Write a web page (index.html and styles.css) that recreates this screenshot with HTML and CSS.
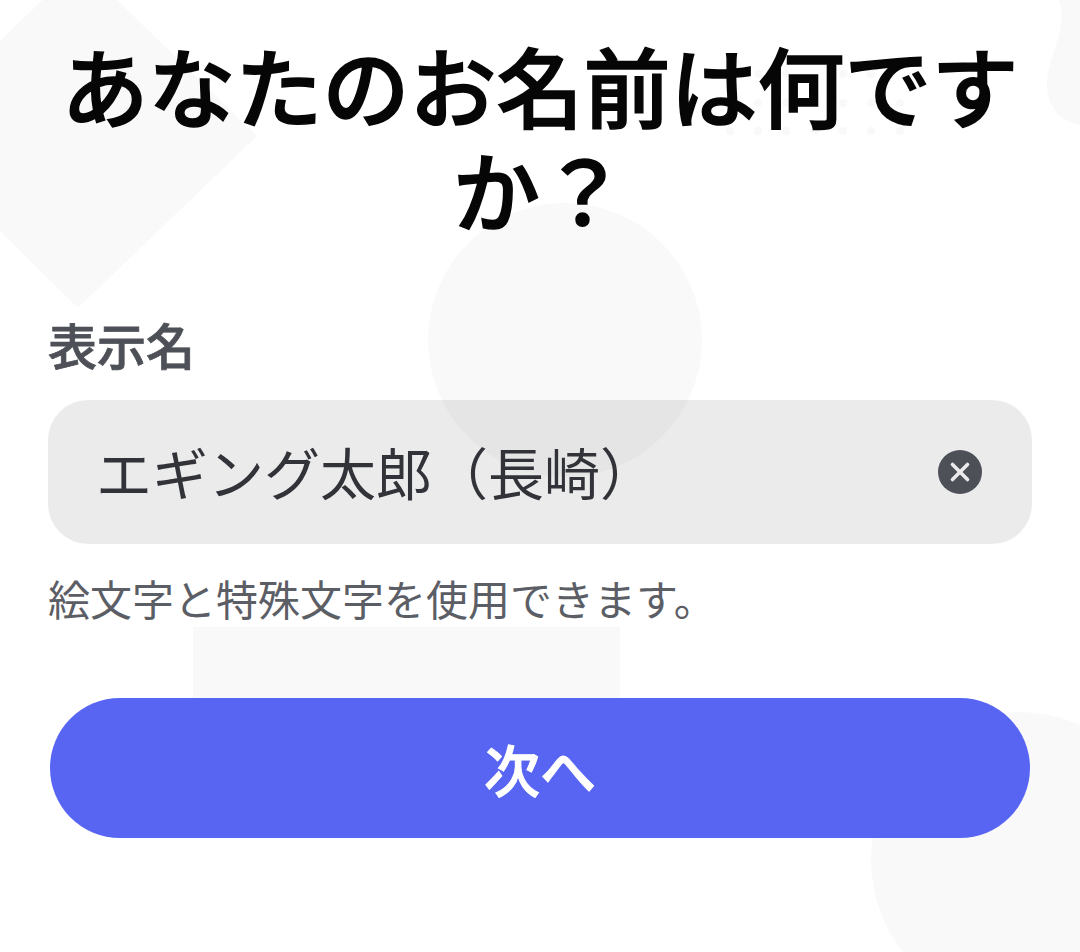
FILE: index.html
```html
<!DOCTYPE html>
<html lang="ja">
<head>
    <meta charset="UTF-8">
    <meta name="viewport" content="width=device-width, initial-scale=1.0">
    <title>表示名</title>
    <link rel="stylesheet" href="styles.css">
</head>
<body>
    <svg class="backdrop" width="1080" height="952" viewBox="0 0 1080 952" aria-hidden="true">
      <path d="M80 -36 L256 135 Q257 136 256 137 L80 306 Q78 307 76 306 L-98 135 Z"/>
      <circle cx="565" cy="340" r="137"/>
      <rect x="193" y="627" width="427" height="110"/>
      <circle cx="1019" cy="860" r="148"/>
      <path d="M1058 -2 C1070 30 1047 55 1047 85 C1047 108 1062 123 1082 125 L1082 -2 Z"/>
      <g>
        <circle cx="730" cy="131" r="4"/><circle cx="758" cy="131" r="4"/><circle cx="786" cy="131" r="4"/><circle cx="815" cy="131" r="4"/><circle cx="843" cy="131" r="4"/><circle cx="871" cy="131" r="4"/><circle cx="900" cy="131" r="4"/>
        <circle cx="758" cy="103" r="4"/><circle cx="786" cy="103" r="4"/><circle cx="815" cy="103" r="4"/><circle cx="843" cy="103" r="4"/><circle cx="871" cy="103" r="4"/><circle cx="900" cy="103" r="4"/>
        <circle cx="758" cy="74" r="4"/><circle cx="786" cy="74" r="4"/><circle cx="843" cy="74" r="4"/><circle cx="871" cy="74" r="4"/>
      </g>
    </svg>

    <main class="page">
      <h1 class="page-title">あなたのお名前は何ですか？</h1>

      <form class="name-form">
        <label class="name-form-label" for="display-name">表示名</label>
        <div class="name-form-field">
          <input class="name-form-input" id="display-name" type="text" value="エギング太郎（長崎）">
          <button class="name-form-clear" type="button" aria-label="クリア">
            <svg width="44" height="44" viewBox="0 0 44 44">
              <circle cx="22" cy="22" r="22" fill="#4e5058"/>
              <path d="M14.5 14.5 L29.5 29.5 M29.5 14.5 L14.5 29.5" stroke="#ebebeb" stroke-width="3.6" stroke-linecap="round"/>
            </svg>
          </button>
        </div>
        <p class="name-form-hint">絵文字と特殊文字を使用できます。</p>
        <button class="name-form-submit" type="submit">次へ</button>
      </form>
    </main>
</body>
</html>
```

FILE: styles.css
```css
html,
body {
  height: 100%;
}

body {
  position: relative;
  margin: 0;
  min-width: 1080px;
  overflow: hidden;
  background-color: #ffffff;
  font-family: "Noto Sans CJK JP", "Noto Sans", sans-serif;
}

.backdrop {
  position: absolute;
  top: 0;
  left: 0;
  fill: #f9f9fa;
}

.page {
  position: relative;
  box-sizing: border-box;
  padding: 32px 48px 0;
}

.page-title {
  margin: 0 0 72px;
  font-size: 87px;
  line-height: 104px;
  font-weight: 500;
  -webkit-text-stroke: 1.5px #060607;
  text-align: center;
  color: #060607;
}

.name-form {
  display: flex;
  flex-direction: column;
}

.name-form-label {
  margin-bottom: 24px;
  font-size: 49px;
  line-height: 64px;
  font-weight: 500;
  -webkit-text-stroke: 0.8px #4e5058;
  color: #4e5058;
}

.name-form-field {
  display: flex;
  align-items: center;
  height: 144px;
  padding: 0 50px 0 48px;
  background-color: rgba(0, 0, 0, 0.08);
  border-radius: 40px;
}

.name-form-input {
  flex-grow: 1;
  min-width: 0;
  padding: 0 0 4px;
  border: none;
  outline: none;
  background: none;
  font: inherit;
  font-size: 56px;
  color: #313338;
}

.name-form-clear {
  display: flex;
  flex-shrink: 0;
  padding: 0;
  border: none;
  background: none;
  cursor: pointer;
}

.name-form-hint {
  margin: 26px 0 0;
  font-size: 42px;
  line-height: 56px;
  color: #5c5e66;
}

.name-form-submit {
  align-self: center;
  width: 980px;
  height: 140px;
  margin-top: 72px;
  padding: 0 0 2px;
  border: none;
  border-radius: 70px;
  background-color: #5865f2;
  font: inherit;
  font-size: 56px;
  font-weight: 500;
  -webkit-text-stroke: 1px #ffffff;
  color: #ffffff;
  cursor: pointer;
}
```
